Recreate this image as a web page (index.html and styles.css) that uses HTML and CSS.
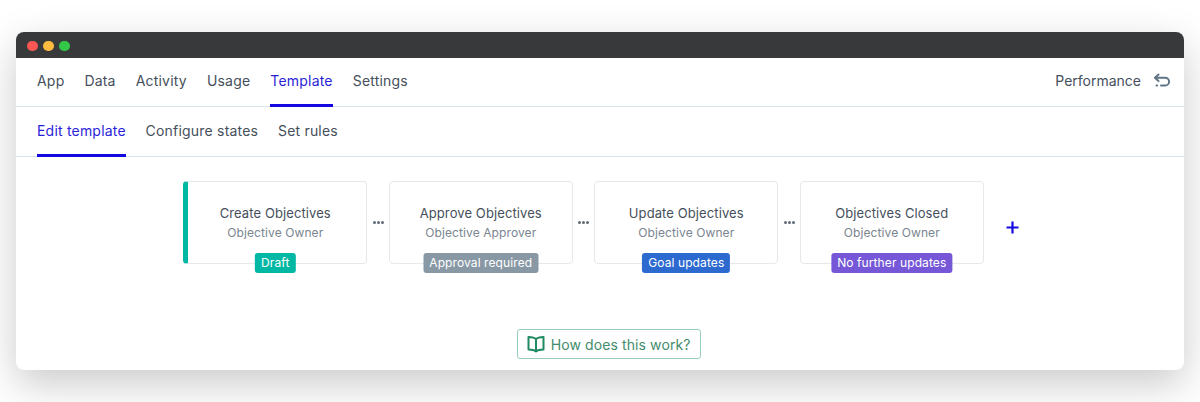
FILE: index.html
```html
<!DOCTYPE html>
<html lang="en">
<head>
<meta charset="utf-8">
<title>Template</title>
<link rel="stylesheet" href="styles.css">
</head>
<body>
<div class="window">
  <div class="titlebar">
    <span class="light red"></span><span class="light yellow"></span><span class="light green"></span>
  </div>
  <nav class="nav">
    <a class="nav-item">App</a>
    <a class="nav-item">Data</a>
    <a class="nav-item">Activity</a>
    <a class="nav-item">Usage</a>
    <a class="nav-item active">Template</a>
    <a class="nav-item">Settings</a>
    <div class="nav-right">
      <span>Performance</span>
      <svg class="back" width="18" height="18" viewBox="0 0 18 18" fill="none" stroke="#5f7484" stroke-width="2" stroke-linecap="round" stroke-linejoin="round"><path d="M5.500 2.500 2 5.800l3.500 3.200"/><path d="M2.500 5.800h9.700a3.600 3.600 0 0 1 0 7.700H8"/><path d="M3.500 13.500h.6"/></svg>
    </div>
  </nav>
  <nav class="nav sub">
    <a class="nav-item active">Edit template</a>
    <a class="nav-item">Configure states</a>
    <a class="nav-item">Set rules</a>
  </nav>
  <main class="content">
    <div class="chain">
      <div class="card first">
        <div class="card-title">Create Objectives</div>
        <div class="card-sub">Objective Owner</div>
        <span class="tag teal">Draft</span>
      </div>
      <div class="conn"><i></i><i></i><i></i></div>
      <div class="card">
        <div class="card-title">Approve Objectives</div>
        <div class="card-sub">Objective Approver</div>
        <span class="tag grey">Approval required</span>
      </div>
      <div class="conn"><i></i><i></i><i></i></div>
      <div class="card">
        <div class="card-title">Update Objectives</div>
        <div class="card-sub">Objective Owner</div>
        <span class="tag blue">Goal updates</span>
      </div>
      <div class="conn"><i></i><i></i><i></i></div>
      <div class="card">
        <div class="card-title">Objectives Closed</div>
        <div class="card-sub">Objective Owner</div>
        <span class="tag purple">No further updates</span>
      </div>
      <div class="plus">
        <svg width="13" height="13" viewBox="0 0 13 13" stroke="#1408e0" stroke-width="2.200" fill="none"><path d="M6.500 0.500v12M0.500 6.500h12"/></svg>
      </div>
    </div>
    <div class="help-row">
      <a class="help">
        <svg width="18" height="18" viewBox="0 0 18 18" fill="none" stroke="#1f8a5f" stroke-width="2" stroke-linejoin="round" stroke-linecap="round"><path d="M9 4.200C7.800 2.800 5 2 1.500 2v12.500c3.500 0 6 .6 7.500 2 1.500-1.400 4-2 7.500-2V2C13 2 10.200 2.800 9 4.200Z"/><path d="M9 4.200V16"/></svg>
        <span>How does this work?</span>
      </a>
    </div>
  </main>
</div>
</body>
</html>
```
FILE: styles.css
```css
* { box-sizing: border-box; }
html, body { margin: 0; height: 402px; overflow: hidden; background: #fff; }
body { padding: 32px 16px 0; font-family: Inter, "Liberation Sans", sans-serif; color: #454f5b; }
.window {
  height: 338px;
  background: #fff;
  border-radius: 8px;
  box-shadow: 0 14px 40px rgba(0, 0, 0, 0.21);
}
.titlebar {
  height: 26px;
  background: #38393b;
  border-radius: 8px 8px 0 0;
  display: flex;
  align-items: center;
  padding: 2px 0 0 11px;
  gap: 5.700px;
}
.light { width: 10.500px; height: 10.500px; border-radius: 50%; }
.red { background: #fc5753; }
.yellow { background: #fdbc40; }
.green { background: #33c748; }
.nav {
  height: 49px;
  display: flex;
  gap: 20px;
  padding: 0 13px 0 21px;
  border-bottom: 1px solid #d9e3ea;
  font-size: 14px;
  letter-spacing: 0.2px;
}
.sub { height: 50px; gap: 19.800px; }
.nav-item {
  display: flex;
  align-items: center;
  height: calc(100% + 1px);
  padding-top: 1px;
  padding-bottom: 3px;
  border-bottom: 3px solid transparent;
  white-space: nowrap;
}
.sub .nav-item { padding-bottom: 1px; }
.nav-item.active { color: #2b1fd8; border-bottom-color: #1408e0; }
.nav-right {
  margin-left: auto;
  display: flex;
  align-items: center;
  gap: 12px;
  padding-bottom: 3px;
  letter-spacing: 0;
}
.content { display: flex; flex-direction: column; align-items: center; }
.chain { display: flex; margin-top: 24px; }
.card {
  position: relative;
  width: 184px;
  height: 83px;
  border: 1px solid #e6e8eb;
  border-radius: 4px;
  background: #fff;
  display: flex;
  flex-direction: column;
  align-items: center;
  padding-top: 22px;
  font-size: 13px;
  letter-spacing: 0.1px;
}
.card.first { border-left: 5px solid #00b8a3; padding-right: 4px; }
.card.first .tag { margin-left: -2px; }
.card-title { line-height: 18px; color: #454f5b; }
.card-sub { line-height: 18px; margin-top: 2px; font-size: 12px; letter-spacing: 0.1px; color: #7a8590; }
.tag {
  position: absolute;
  top: 71px;
  left: 50%;
  transform: translateX(-50%);
  height: 20px;
  padding: 0 6px;
  border-radius: 3px;
  font-size: 12px;
  letter-spacing: 0.1px;
  line-height: 20px;
  color: #fff;
  white-space: nowrap;
}
.teal { background: #00b8a3; }
.grey { background: #8898a5; }
.blue { background: #2d6ad0; }
.purple { background: #7557d8; }
.conn {
  width: 21.500px;
  display: flex;
  justify-content: center;
  align-items: center;
  gap: 1px;
}
.conn i { width: 3px; height: 3px; border-radius: 50%; background: #5f6b76; }
.plus { width: 33px; display: flex; align-items: center; justify-content: flex-end; padding-top: 10px; }
.plus svg { margin-right: -2px; }
.help-row { margin: 65px 0 0 18px; }
.help {
  display: flex;
  align-items: center;
  gap: 6px;
  width: 184.500px;
  height: 30px;
  padding-left: 9px;
  border: 1px solid #97d0b6;
  border-radius: 3px;
  font-size: 14px;
  letter-spacing: 0.100px;
  color: #3f8d6c;
}
```
